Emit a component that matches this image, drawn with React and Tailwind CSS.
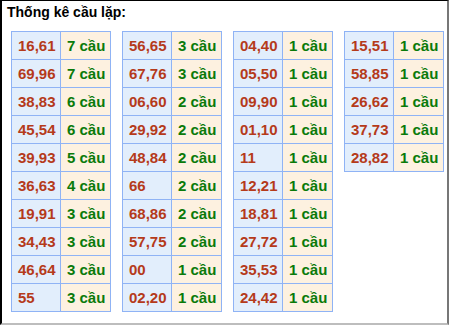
const columns = [
  [
    ["16,61", "7 cầu"],
    ["69,96", "7 cầu"],
    ["38,83", "6 cầu"],
    ["45,54", "6 cầu"],
    ["39,93", "5 cầu"],
    ["36,63", "4 cầu"],
    ["19,91", "3 cầu"],
    ["34,43", "3 cầu"],
    ["46,64", "3 cầu"],
    ["55", "3 cầu"],
  ],
  [
    ["56,65", "3 cầu"],
    ["67,76", "3 cầu"],
    ["06,60", "2 cầu"],
    ["29,92", "2 cầu"],
    ["48,84", "2 cầu"],
    ["66", "2 cầu"],
    ["68,86", "2 cầu"],
    ["57,75", "2 cầu"],
    ["00", "1 cầu"],
    ["02,20", "1 cầu"],
  ],
  [
    ["04,40", "1 cầu"],
    ["05,50", "1 cầu"],
    ["09,90", "1 cầu"],
    ["01,10", "1 cầu"],
    ["11", "1 cầu"],
    ["12,21", "1 cầu"],
    ["18,81", "1 cầu"],
    ["27,72", "1 cầu"],
    ["35,53", "1 cầu"],
    ["24,42", "1 cầu"],
  ],
  [
    ["15,51", "1 cầu"],
    ["58,85", "1 cầu"],
    ["26,62", "1 cầu"],
    ["37,73", "1 cầu"],
    ["28,82", "1 cầu"],
  ],
];

function PairTable({ rows }) {
  return (
    <div className="flex w-[100px] flex-col border-l border-t border-[#8fb3f5]">
      {rows.map(([pair, count]) => (
        <div key={pair} className="flex h-[28px]">
          <div className="flex w-[49px] items-center border-b border-r border-[#8fb3f5] bg-[#e2eefc] pl-[6px] text-[#b53a1a]">
            {pair}
          </div>
          <div className="flex w-[50px] items-center border-b border-r border-[#8fb3f5] bg-[#fdf1e0] pl-[6px] text-[#0a7a0a]">
            {count}
          </div>
        </div>
      ))}
    </div>
  );
}

export default function App() {
  return (
    <div
      className="h-[325px] w-[449px] border-b-2 border-l-2 border-r-2 border-t border-b-[#bdbdbd] border-l-black border-r-[#777777] border-t-black bg-white"
      style={{ fontFamily: '"Liberation Sans", Arial, sans-serif' }}
    >
      <div className="pl-[5px] pt-[2px] text-[14px] font-bold leading-[18px] text-black">
        Thống kê cầu lặp:
      </div>
      <div className="mt-[10px] flex items-start gap-[11px] pl-[9px] text-[15px] font-bold leading-none">
        {columns.map((rows, i) => (
          <PairTable key={i} rows={rows} />
        ))}
      </div>
    </div>
  );
}
